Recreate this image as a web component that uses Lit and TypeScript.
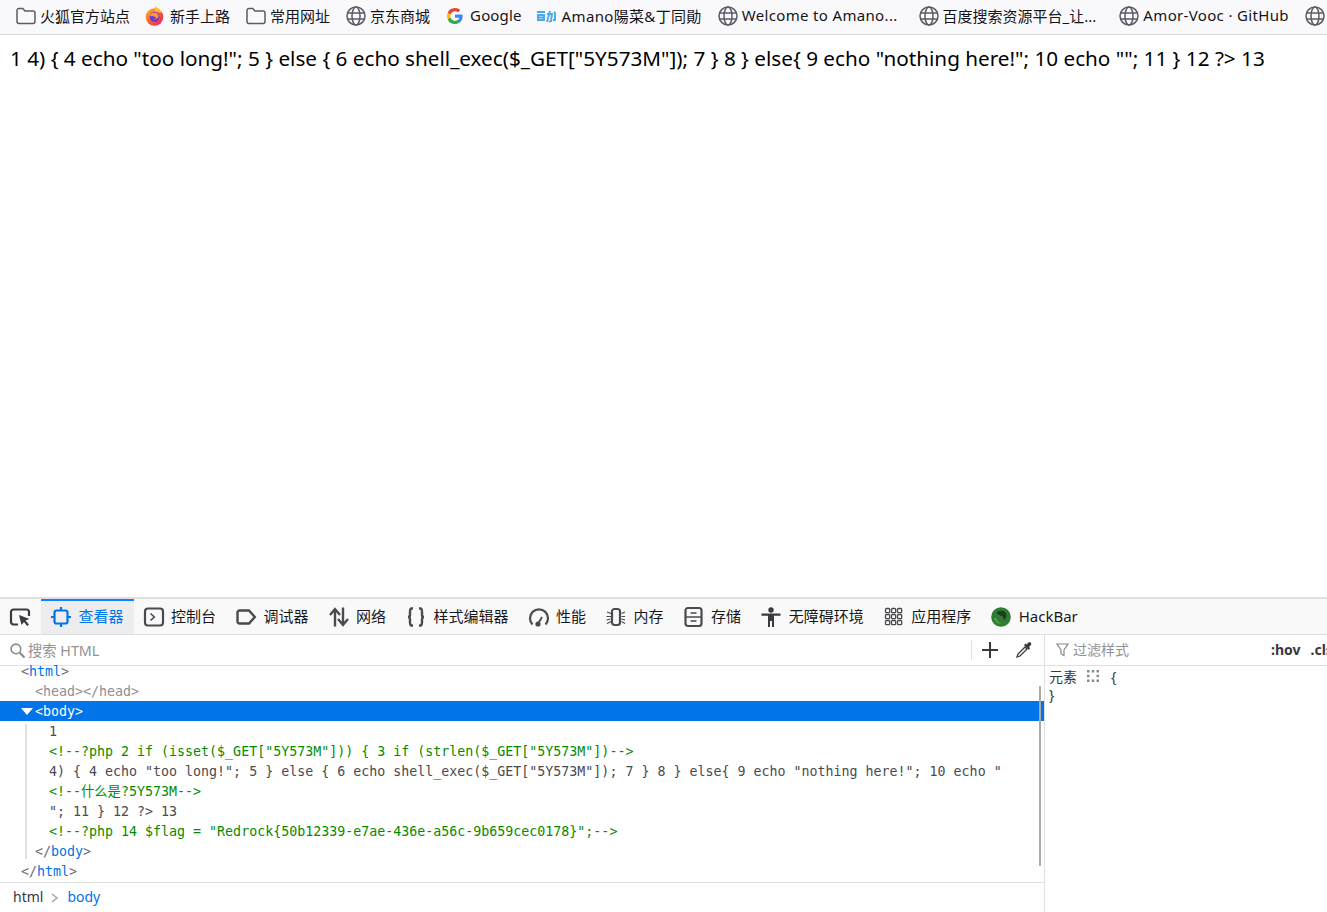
import { LitElement, html, css, svg } from "lit";
import { customElement } from "lit/decorators.js";

const folder = svg`<path d="M1 4.500a2 2 0 0 1 2-2h3.800l2.200 2.400h8a2 2 0 0 1 2 2v8.600a2 2 0 0 1-2 2H3a2 2 0 0 1-2-2z" fill="none" stroke="#5b5b66" stroke-width="1.500"/>`;
const globe = svg`<g fill="none" stroke="#5b5b66" stroke-width="1.500"><circle cx="10" cy="10" r="9"/><ellipse cx="10" cy="10" rx="4" ry="9"/><path d="M1.500 7h17M1.500 13h17"/></g>`;
const fox = svg`<defs><linearGradient id="fx" x1="0" y1="0" x2="1" y2="1"><stop offset="0" stop-color="#ffbd2e"/><stop offset=".5" stop-color="#ff5a36"/><stop offset="1" stop-color="#d6246e"/></linearGradient></defs><g transform="translate(-1.500 0)"><circle cx="10" cy="11" r="8.800" fill="url(#fx)"/><path d="M11 0c2 2 5 3 6 7l-7-2z" fill="#ffbd2e"/><circle cx="10" cy="11" r="4.800" fill="#6a3bd0"/><path d="M5 9c3-3 8-3 9 1 0 2-3 4-5 3 2 0 3-1 2-2-2-1-4 0-6-2z" fill="#ff9a2e"/></g>`;
const gicon = svg`<g transform="translate(-1 0)"><path d="M17.600 10.200c0-.6-.1-1.200-.2-1.700H10v3.200h4.300a3.700 3.700 0 0 1-1.600 2.400v2h2.600c1.500-1.400 2.300-3.400 2.300-5.900z" fill="#4285f4"/><path d="M10 18c2.200 0 4-.7 5.300-1.900l-2.600-2c-.7.500-1.600.8-2.700.8-2.100 0-3.900-1.400-4.500-3.300H2.800v2.100A8 8 0 0 0 10 18z" fill="#34a853"/><path d="M5.500 11.600a4.800 4.800 0 0 1 0-3.100V6.400H2.800a8 8 0 0 0 0 7.200z" fill="#fbbc05"/><path d="M10 5.200c1.200 0 2.200.4 3 1.200l2.300-2.300A8 8 0 0 0 2.800 6.400l2.700 2.100C6.100 6.600 7.900 5.200 10 5.200z" fill="#ea4335"/></g>`;
const amano = svg`<g fill="none" stroke="#4aa8e8" stroke-width="1.900"><path d="M-1 6h8M0 9h6v5H0zM0 11.500h6"/><path d="M9 8h5l-1 7-2 1M12 5l-3 11M16 6l1 1v7h-2"/></g>`;

const S = "#4a4a4f";
const picker = svg`<g fill="none" stroke="#3a3a3f" stroke-width="2.200"><path d="M8 17.500H3.500A2.500 2.500 0 0 1 1 15V5A2.500 2.500 0 0 1 3.500 2.500h13A2.500 2.500 0 0 1 19 5v4"/></g><path d="M9 8l10.500 4-4 1.500 3.500 4-1.800 1.500-3.200-4-2.500 3z" fill="#3a3a3f"/>`;
const inspector = svg`<g fill="none" stroke="#0074e8" stroke-width="2.200"><rect x="3.500" y="3.500" width="13" height="13" rx="2"/></g><path d="M10 0v4M10 16v4M0 10h4M16 10h4" stroke="#0074e8" stroke-width="2.200"/>`;
const consoleI = svg`<rect x="1" y="1.500" width="18" height="17" rx="3" fill="none" stroke="${S}" stroke-width="2.200"/><path d="M6.500 6.500l3.800 3.500-3.800 3.500" fill="none" stroke="${S}" stroke-width="1.600"/>`;
const debuggerI = svg`<path d="M3.500 3.500h9.500l5.800 6.500-5.800 6.500H3.500A2 2 0 0 1 1.500 14.500v-9a2 2 0 0 1 2-2z" fill="none" stroke="${S}" stroke-width="2.400"/>`;
const network = svg`<path d="M6 19.500V3M1 8l5-6 5 6M14 .5V17M9 12l5 6 5-6" fill="none" stroke="${S}" stroke-width="2.400"/>`;
const braces = svg`<path d="M7 1.500H5.500C4 1.500 4 3 4 5v3c0 1.500-1 2-2 2 1 0 2 .5 2 2v3c0 2 0 3.500 1.500 3.500H7M13 1.500h1.500C16 1.500 16 3 16 5v3c0 1.500 1 2 2 2-1 0-2 .5-2 2v3c0 2 0 3.500-1.500 3.500H13" fill="none" stroke="${S}" stroke-width="2.400"/>`;
const perf = svg`<path d="M3.500 17.500A9 9 0 1 1 16.500 17.500" fill="none" stroke="${S}" stroke-width="2.200"/><path d="M9 17l4-7" stroke="${S}" stroke-width="1.800"/><circle cx="9" cy="17" r="2.600" fill="${S}"/>`;
const memory = svg`<rect x="6" y="2" width="8" height="16" rx="2.500" fill="none" stroke="${S}" stroke-width="2.200"/><path d="M1 5l4 1.500M.500 9.500H5M.500 13l4-1M1 16.500l4-2M15.500 6.500L19 5M15.500 9.500H19M15.500 12l3.500 1M15.500 14.500l3.500 2" stroke="${S}" stroke-width="1.200" fill="none"/>`;
const storage = svg`<rect x="1.500" y="1" width="16" height="18" rx="2.500" fill="none" stroke="${S}" stroke-width="2.200"/><path d="M1.500 10h16M6.500 6h6M6.500 14h6" stroke="${S}" stroke-width="1.600"/>`;
const access = svg`<circle cx="10" cy="3" r="2.700" fill="#3a3a3f"/><path d="M.500 6.500h19v2.200H13V20h-2v-6H9v6H7V8.700H.500z" fill="#3a3a3f"/>`;
const apps = svg`<g fill="none" stroke="${S}" stroke-width="1.300">${[1.5, 7.5, 13.5].flatMap((y) => [1.5, 7.5, 13.5].map((x) => svg`<rect x="${x}" y="${y}" width="4.200" height="4.200" rx="1"/>`))}</g>`;
const hackbar = svg`<circle cx="10" cy="10" r="9.800" fill="#2f7d32"/><path d="M5 6c3-3 8-3 10 0 1 3 0 6-3 7 1-2 0-4-2-4-2-1-3-2-5-3z" fill="#1c3d1e"/><path d="M3 11c1 3 4 6 8 6-3-1-5-3-6-6z" fill="#5aa84f"/>`;

const bookmarks = [
  { i: folder, t: "火狐官方站点", c: "" },
  { i: fox, t: "新手上路", c: "" },
  { i: folder, t: "常用网址", c: "" },
  { i: globe, t: "京东商城", c: "" },
  { i: gicon, t: "Google", c: "goog" },
  { i: amano, t: "Amano陽菜&丁同勛", c: "lat" },
  { i: globe, t: "Welcome to Amano...", c: "lat trunc" },
  { i: globe, t: "百度搜索资源平台_让...", c: "trunc2" },
  { i: globe, t: "Amor-Vooc · GitHub", c: "lat" },
  { i: globe, t: "", c: "" },
];

const tabs = [
  { i: inspector, t: "查看器", on: true },
  { i: consoleI, t: "控制台" },
  { i: debuggerI, t: "调试器" },
  { i: network, t: "网络" },
  { i: braces, t: "样式编辑器" },
  { i: perf, t: "性能" },
  { i: memory, t: "内存" },
  { i: storage, t: "存储" },
  { i: access, t: "无障碍环境" },
  { i: apps, t: "应用程序" },
  { i: hackbar, t: "HackBar" },
];

const tag = (name: string, close = false) =>
  html`<span class="br">${close ? "</" : "<"}</span><span class="tn">${name}</span><span class="br">&gt;</span>`;

@customElement("app-root")
export class AppRoot extends LitElement {
  static styles = css`
    :host {
      display: flex;
      flex-direction: column;
      height: 100vh;
      overflow: hidden;
      font-family: "Noto Sans", "Noto Sans CJK SC", sans-serif;
      color: #15141a;
      background: #fff;
    }
    svg { display: block; flex: none; width: 20px; height: 20px; overflow: visible; }
    .bm {
      flex: none; height: 35px; box-sizing: border-box; border-bottom: 1px solid #d7d7db; padding-bottom: 2px;
      background: #f9f9fb; display: flex; align-items: center; gap: 16px; padding-left: 16px;
      white-space: nowrap; overflow: hidden; font-size: 15px;
    }
    .bmi { display: flex; align-items: center; gap: 4px; flex: none; }
    .bmi span { margin-bottom: 2px; }
    .goog { letter-spacing: .15px; }
    .lat { letter-spacing: .34px; }
    .trunc { margin-right: 5px; }
    .trunc2 { margin-right: 7px; }
    .page {
      flex: 1; min-height: 0; padding: 10px 10px 0; font-size: 20.700px; line-height: 26px;
      white-space: nowrap; color: #000;
    }
    .dev { flex: none; height: 315px; border-top: 2px solid #e0e0e2; box-sizing: border-box; display: flex; flex-direction: column; }
    .tools {
      flex: none; height: 36px; box-sizing: border-box; border-bottom: 1px solid #e0e0e2;
      background: #f9f9fa; display: flex; align-items: stretch; font-size: 15px; color: #18181a; white-space: nowrap;
    }
    .pick { width: 41px; display: flex; align-items: center; justify-content: center; box-sizing: border-box; padding-right: 1px; }
    .tab { display: flex; align-items: center; gap: 7.500px; padding: 0 10px 2px; flex: none; box-sizing: border-box; border-top: 2px solid transparent; }
    .tab span { margin-bottom: 2px; }
    .tab.on { border-top-color: #0a84ff; background: #ededf0; color: #0074e8; }
    .panes { flex: 1; min-height: 0; display: grid; grid-template-columns: 1045px 1fr; }
    .left { border-right: 1px solid #e0e0e2; display: flex; flex-direction: column; min-height: 0; min-width: 0; }
    .search, .filter {
      flex: none; height: 31px; box-sizing: border-box; border-bottom: 1px solid #e0e0e2;
      display: flex; align-items: center; font-size: 14px; color: #929296; white-space: nowrap;
    }
    .search span, .filter span { margin-bottom: 2px; }
    .search { padding-left: 10px; gap: 3px; font-size: 14.300px; }
    .search svg.mag { width: 15px; height: 15px; }
    .grow { flex: 1; }
    .search .sep { width: 1px; height: 20px; background: #e0e0e2; margin: 0 6px 0 0; }
    .search svg.plus { width: 18px; height: 18px; margin-right: 13px; }
    .search svg.drop { width: 18px; height: 18px; margin-right: 11px; }
    .markup {
      flex: 1; min-height: 0; position: relative;
      font-family: "DejaVu Sans Mono", "Noto Sans CJK SC", monospace; font-size: 13.300px; color: #4a4a4f;
    }
    .row { height: 20px; line-height: 22px; white-space: pre; }
    .row.first { height: 15px; line-height: 12px; }
    .row.sel { background: #0074e8; color: #fff; display: flex; align-items: center; line-height: 20px; padding-top: 2px; box-sizing: border-box; }
    .row.sel .br, .row.sel .tn { color: #fff; }
    .tri { width: 0; height: 0; margin: -2px 2px 0 21px; border-left: 6px solid transparent; border-right: 6px solid transparent; border-top: 7px solid #fff; }
    .br { color: #6b6b70; }
    .tn { color: #0074e8; }
    .dim .br, .dim .tn { color: #8f8f93; }
    .c { color: #058b00; }
    .i1 { padding-left: 21px; }
    .i2 { padding-left: 35px; }
    .kids { display: flow-root; margin: 3px 0 2px 25px; height: 135px; border-left: 2px solid #e0e0e2; }
    .kwrap { margin-top: -3px; }
    .kids .row { padding-left: 22px; }
    .kids .row.end { padding-left: 8px; }
    .thumb { position: absolute; left: 1039px; top: 20px; width: 2px; height: 180px; background: #aaa; }
    .crumbs {
      flex: none; height: 30px; box-sizing: border-box; border-top: 1px solid #e0e0e2;
      display: flex; align-items: center; padding-left: 13px; font-size: 14px; color: #38383d; gap: 8px;
    }
    .crumbs span, .crumbs b { margin-bottom: 2px; }
    .crumbs b { font-weight: 400; color: #0074e8; }
    .crumbs svg { width: 8px; height: 10px; }
    .right { min-width: 0; overflow: hidden; }
    .filter { padding-left: 11px; gap: 4px; }
    .filter svg { width: 13px; height: 14px; }
    .filter .hov { font-weight: 700; color: #38383d; font-size: 14px; margin-left: 138px; }
    .filter .cls { margin-left: 6px; font-weight: 700; color: #38383d; font-size: 14px; }
    .rule { padding: 1px 4px; font-size: 14px; line-height: 19px; color: #38383d; }
    .rl { display: flex; align-items: center; height: 18px; }
    .rl svg { width: 12px; height: 12px; margin: 0 12px 0 10px; }
  `;

  render() {
    return html`
      <div class="bm">
        ${bookmarks.map(
          (b) => html`<div class="bmi"><svg viewBox="0 0 20 20">${b.i}</svg>${b.t ? html`<span class="${b.c}">${b.t}</span>` : ""}</div>`
        )}
      </div>
      <div class="page">1 4) { 4 echo "too long!"; 5 } else { 6 echo shell_exec($_GET["5Y573M"]); 7 } 8 } else{ 9 echo "nothing here!"; 10 echo ""; 11 } 12 ?&gt; 13</div>
      <div class="dev">
        <div class="tools">
          <div class="pick"><svg viewBox="0 0 20 20">${picker}</svg></div>
          ${tabs.map(
            (t) => html`<div class="tab ${t.on ? "on" : ""}"><svg viewBox="0 0 20 20">${t.i}</svg><span>${t.t}</span></div>`
          )}
        </div>
        <div class="panes">
          <div class="left">
            <div class="search">
              <svg class="mag" viewBox="0 0 14 14"><circle cx="5.500" cy="5.500" r="4.500" fill="none" stroke="#8a8a8f" stroke-width="1.500"/><path d="M9 9l4.500 4.500" stroke="#8a8a8f" stroke-width="2"/></svg>
              <span>搜索 HTML</span>
              <span class="grow"></span>
              <span class="sep"></span>
              <svg class="plus" viewBox="0 0 18 18"><path d="M9 1v16M1 9h16" stroke="#38383d" stroke-width="2"/></svg>
              <svg class="drop" viewBox="0 0 18 18"><path d="M2 16l1-3 7-7 2 2-7 7z" fill="none" stroke="#38383d" stroke-width="1.300"/><path d="M9 4l5 5 1-2-1-1 2-2a1.800 1.800 0 0 0-3-2l-1.500 1.500-1-1z" fill="#38383d"/></svg>
            </div>
            <div class="markup">
              <div class="row first i1">${tag("html")}</div>
              <div class="row i2 dim">${tag("head")}${tag("head", true)}</div>
              <div class="row sel"><span class="tri"></span>${tag("body")}</div>
              <div class="kids">
                <div class="kwrap">
                  <div class="row">1</div>
                  <div class="row c">&lt;!--?php 2 if (isset($_GET["5Y573M"])) { 3 if (strlen($_GET["5Y573M"])--&gt;</div>
                  <div class="row">4) { 4 echo "too long!"; 5 } else { 6 echo shell_exec($_GET["5Y573M"]); 7 } 8 } else{ 9 echo "nothing here!"; 10 echo "</div>
                  <div class="row c">&lt;!--什么是?5Y573M--&gt;</div>
                  <div class="row">"; 11 } 12 ?&gt; 13</div>
                  <div class="row c">&lt;!--?php 14 $flag = "Redrock{50b12339-e7ae-436e-a56c-9b659cec0178}";--&gt;</div>
                  <div class="row end">${tag("body", true)}</div>
                </div>
              </div>
              <div class="row i1">${tag("html", true)}</div>
              <div class="thumb"></div>
            </div>
            <div class="crumbs">
              <span>html</span>
              <svg viewBox="0 0 8 10"><path d="M1 1l5 4-5 4" fill="none" stroke="#a8a8ad" stroke-width="1.600"/></svg>
              <b>body</b>
            </div>
          </div>
          <div class="right">
            <div class="filter">
              <svg viewBox="0 0 13 14"><path d="M1 1h11L8 7v5.500L5 11V7z" fill="none" stroke="#8a8a8f" stroke-width="1.200"/></svg>
              <span>过滤样式</span>
              <span class="hov">:hov</span><span class="cls">.cls</span>
            </div>
            <div class="rule">
              <div class="rl"><span>元素</span><svg viewBox="0 0 12 12"><g fill="#8a8a8f"><rect x="0" y="0" width="2.500" height="2.500"/><rect x="4.700" y="0" width="2.500" height="2.500"/><rect x="9.500" y="0" width="2.500" height="2.500"/><rect x="0" y="4.700" width="2.500" height="2.500"/><rect x="9.500" y="4.700" width="2.500" height="2.500"/><rect x="0" y="9.500" width="2.500" height="2.500"/><rect x="4.700" y="9.500" width="2.500" height="2.500"/><rect x="9.500" y="9.500" width="2.500" height="2.500"/></g></svg><span>{</span></div>
              <div>}</div>
            </div>
          </div>
        </div>
      </div>
    `;
  }
}
